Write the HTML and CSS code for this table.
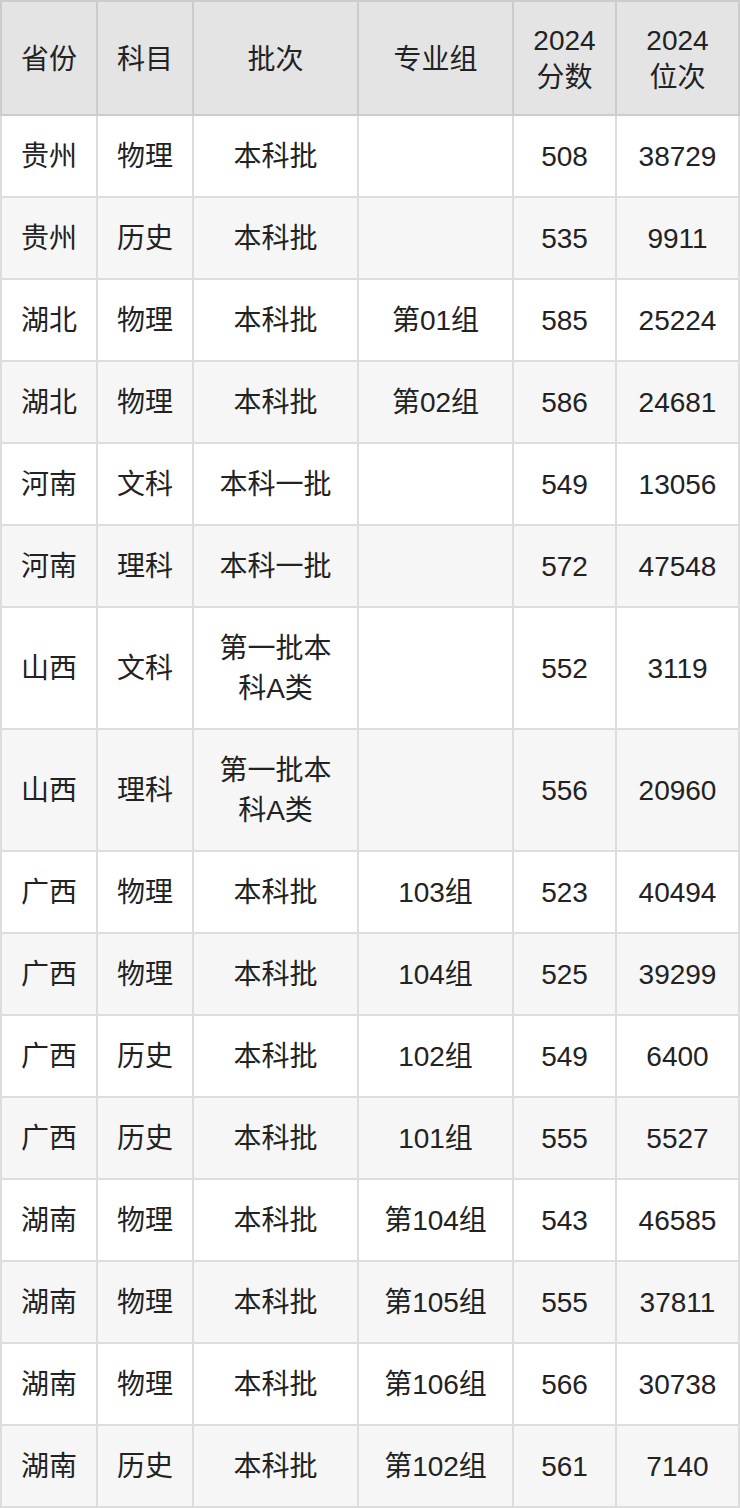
FILE: index.html
```html
<!DOCTYPE html>
<html lang="zh">
<head>
<meta charset="utf-8">
<title>录取分数</title>
<link rel="stylesheet" href="styles.css">
</head>
<body>
<table class="score-table">
  <thead>
    <tr>
      <th class="c1">省份</th>
      <th class="c2">科目</th>
      <th class="c3">批次</th>
      <th class="c4">专业组</th>
      <th class="c5">2024<br>分数</th>
      <th class="c6">2024<br>位次</th>
    </tr>
  </thead>
  <tbody>
    <tr><td>贵州</td><td>物理</td><td>本科批</td><td></td><td>508</td><td>38729</td></tr>
    <tr><td>贵州</td><td>历史</td><td>本科批</td><td></td><td>535</td><td>9911</td></tr>
    <tr><td>湖北</td><td>物理</td><td>本科批</td><td>第01组</td><td>585</td><td>25224</td></tr>
    <tr><td>湖北</td><td>物理</td><td>本科批</td><td>第02组</td><td>586</td><td>24681</td></tr>
    <tr><td>河南</td><td>文科</td><td>本科一批</td><td></td><td>549</td><td>13056</td></tr>
    <tr><td>河南</td><td>理科</td><td>本科一批</td><td></td><td>572</td><td>47548</td></tr>
    <tr><td>山西</td><td>文科</td><td>第一批本<br>科A类</td><td></td><td>552</td><td>3119</td></tr>
    <tr><td>山西</td><td>理科</td><td>第一批本<br>科A类</td><td></td><td>556</td><td>20960</td></tr>
    <tr><td>广西</td><td>物理</td><td>本科批</td><td>103组</td><td>523</td><td>40494</td></tr>
    <tr><td>广西</td><td>物理</td><td>本科批</td><td>104组</td><td>525</td><td>39299</td></tr>
    <tr><td>广西</td><td>历史</td><td>本科批</td><td>102组</td><td>549</td><td>6400</td></tr>
    <tr><td>广西</td><td>历史</td><td>本科批</td><td>101组</td><td>555</td><td>5527</td></tr>
    <tr><td>湖南</td><td>物理</td><td>本科批</td><td>第104组</td><td>543</td><td>46585</td></tr>
    <tr><td>湖南</td><td>物理</td><td>本科批</td><td>第105组</td><td>555</td><td>37811</td></tr>
    <tr><td>湖南</td><td>物理</td><td>本科批</td><td>第106组</td><td>566</td><td>30738</td></tr>
    <tr><td>湖南</td><td>历史</td><td>本科批</td><td>第102组</td><td>561</td><td>7140</td></tr>
  </tbody>
</table>
</body>
</html>
```

FILE: styles.css
```css
html, body {
  margin: 0;
  padding: 0;
  background: #ffffff;
}

.score-table {
  width: 740px;
  table-layout: fixed;
  border-collapse: separate;
  border-spacing: 0;
  font-family: "Liberation Sans", "Noto Sans CJK SC", sans-serif;
  font-size: 28px;
  color: #222222;
}

.score-table th,
.score-table td {
  box-sizing: border-box;
  text-align: center;
  vertical-align: middle;
  font-weight: normal;
  padding: 0;
}

.score-table th {
  background: #e4e4e4;
  border-top: 2px solid #cccccc;
  border-right: 2px solid #cccccc;
  border-bottom: 2px solid #cccccc;
  padding: 20px 0 18px;
  line-height: 37px;
}

.score-table th:first-child {
  border-left: 2px solid #cccccc;
}

.score-table td {
  border-right: 2px solid #dddddd;
  border-bottom: 2px solid #dddddd;
  padding: 21px 0 19px;
  line-height: 40px;
}

.score-table td:first-child {
  border-left: 2px solid #dddddd;
}

.score-table tbody tr:nth-child(even) td {
  background: #f6f6f6;
}

.c1 { width: 98px; }
.c2 { width: 96px; }
.c3 { width: 165px; }
.c4 { width: 155px; }
.c5 { width: 103px; }
.c6 { width: 123px; }
```
